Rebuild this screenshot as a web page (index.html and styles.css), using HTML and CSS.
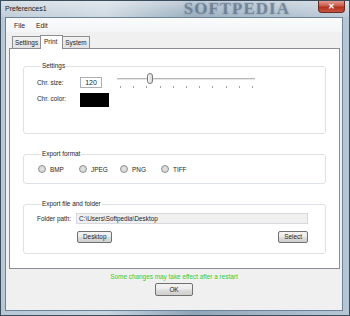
FILE: index.html
```html
<!DOCTYPE html>
<html>
<head>
    <meta charset="UTF-8">
    <title>Preferences dialog</title>
    <link rel="stylesheet" href="styles.css">
</head>
<body>
    <div class="window">
        <div class="titlebar">
            <span class="title">Preferences1</span>
            <span class="watermark">SOFTPEDIA</span>
            <div class="close-btn">&#x2715;</div>
        </div>

        <div class="client">
            <div class="menubar">
                <span class="menu-item">File</span>
                <span class="menu-item">Edit</span>
            </div>

            <div class="tabs">
                <div class="tab">Settings</div>
                <div class="tab tab-active">Print</div>
                <div class="tab">System</div>
            </div>

            <div class="panel">
                <fieldset class="group group-settings">
                    <legend>Settings</legend>
                    <div class="row">
                        <span class="label">Chr. size:</span>
                        <div class="num-box">120</div>
                        <div class="slider">
                            <div class="slider-track"></div>
                            <div class="slider-thumb"></div>
                            <div class="slider-ticks">
                                <i></i><i></i><i></i><i></i><i></i><i></i><i></i><i></i><i></i><i></i><i></i>
                            </div>
                        </div>
                    </div>
                    <div class="row">
                        <span class="label">Chr. color:</span>
                        <div class="color-box"></div>
                    </div>
                </fieldset>

                <fieldset class="group group-format">
                    <legend>Export format</legend>
                    <div class="radio-row">
                        <label class="radio"><span class="dot"></span>BMP</label>
                        <label class="radio"><span class="dot"></span>JPEG</label>
                        <label class="radio"><span class="dot"></span>PNG</label>
                        <label class="radio"><span class="dot"></span>TIFF</label>
                    </div>
                </fieldset>

                <fieldset class="group group-folder">
                    <legend>Export file and folder</legend>
                    <div class="row">
                        <span class="label label-path">Folder path:</span>
                        <div class="path-box">C:\Users\Softpedia\Desktop</div>
                    </div>
                    <div class="btn-row">
                        <button class="btn">Desktop</button>
                        <button class="btn">Select</button>
                    </div>
                </fieldset>
            </div>

            <div class="notice">Some changes may take effect after a restart</div>
            <div class="ok-row">
                <button class="btn btn-ok">OK</button>
            </div>
        </div>
    </div>
</body>
</html>
```

FILE: styles.css
```css
body {
    margin: 0;
    font-family: 'Liberation Sans', Arial, sans-serif;
    font-size: 6.4px;
    color: #1e1e1e;
    background: #a7b9c9;
}
.window {
    width: 350px;
    height: 316px;
    display: flex;
    flex-direction: column;
    background: linear-gradient(90deg, #b8c7d4 0%, #c9d5df 30%, #8fa5b8 55%, #a3b6c6 75%, #b7c6d3 100%);
    box-sizing: border-box;
    border: 1px solid #3b4c5c;
}
.titlebar {
    height: 16px;
    display: flex;
    align-items: flex-start;
    padding-left: 4px;
    background: linear-gradient(180deg, rgba(255,255,255,0.45) 0%, rgba(255,255,255,0.1) 100%);
}
.title {
    line-height: 15px;
    font-size: 7px;
    color: #1a1a1a;
}
.watermark {
    margin-left: auto;
    line-height: 16px;
    font-family: 'Liberation Serif', serif;
    font-size: 17px;
    font-weight: bold;
    letter-spacing: 1px;
    color: rgba(60, 80, 110, 0.4);
    text-shadow: 0 0 2px rgba(60, 80, 110, 0.4);
}
.close-btn {
    margin-left: 28px;
    margin-right: 4px;
    width: 27px;
    height: 12px;
    flex-shrink: 0;
    background: linear-gradient(180deg, #e49a8c 0%, #c8584a 45%, #b4301f 55%, #c65440 100%);
    border: 1px solid #6b2a22;
    border-top: none;
    border-radius: 0 0 4px 4px;
    box-sizing: border-box;
    color: #fff;
    font-size: 8px;
    font-weight: bold;
    text-align: center;
    line-height: 11px;
}
.client {
    flex: 1;
    margin: 0 6px 4px 4px;
    background: #f0f0f0;
    border: 1px solid #6d8399;
    display: flex;
    flex-direction: column;
}
.menubar {
    height: 14px;
    display: flex;
    align-items: center;
    gap: 11px;
    padding-left: 8px;
    font-size: 6.8px;
    background: linear-gradient(180deg, #fbfbfc 0%, #f3f5f7 100%);
}
.tabs {
    display: flex;
    margin: 3px 0 0 6px;
    height: 13px;
    align-items: flex-end;
}
.tab {
    height: 12px;
    box-sizing: border-box;
    padding: 0 2px;
    line-height: 12px;
    background: linear-gradient(180deg, #f2f2f2 0%, #e1e1e1 100%);
    border: 1px solid #8c8e94;
    border-bottom: none;
    margin-right: -1px;
}
.tab-active {
    height: 14px;
    margin-bottom: -1px;
    padding: 0 5px 0 3px;
    background: #fff;
    position: relative;
    line-height: 11px;
}
.panel {
    margin: 0 2px 0 3px;
    height: 221px;
    box-sizing: border-box;
    background: #fff;
    border: 1px solid #898c95;
    padding: 13px 13px 0 13px;
    display: flex;
    flex-direction: column;
    gap: 16px;
}
.group {
    margin: 0;
    border: 1px solid #dce2e7;
    border-radius: 3px;
    padding: 0 13px;
    min-width: 0;
}
.group legend {
    padding: 0 1px;
    margin-left: 4px;
    line-height: 8px;
}
.group-settings {
    height: 72px;
    box-sizing: border-box;
    padding-top: 4px;
}
.group-format {
    height: 34px;
    box-sizing: border-box;
}
.group-folder {
    height: 54px;
    box-sizing: border-box;
    padding-top: 2px;
}
.row {
    display: flex;
    align-items: center;
    height: 16px;
}
.label {
    width: 43px;
    flex-shrink: 0;
}
.label-path {
    width: 39px;
}
.num-box {
    width: 22px;
    height: 11px;
    box-sizing: border-box;
    border: 1px solid #abadb3;
    text-align: center;
    line-height: 9px;
    font-size: 7px;
}
.slider {
    position: relative;
    width: 138px;
    height: 16px;
    margin-left: 15px;
}
.slider-track {
    position: absolute;
    left: 0;
    right: 0;
    top: 4px;
    height: 1px;
    background: #b8b8b8;
    border-bottom: 1px solid #e6e6e6;
}
.slider-thumb {
    position: absolute;
    left: 30px;
    top: -1px;
    width: 6px;
    height: 11px;
    box-sizing: border-box;
    border: 1px solid #7a7a7a;
    border-radius: 3px;
    background: linear-gradient(90deg, #f7f7f7, #d9d9d9);
}
.slider-ticks {
    position: absolute;
    left: 3px;
    right: 2px;
    top: 12px;
    display: flex;
    justify-content: space-between;
}
.slider-ticks i {
    width: 1px;
    height: 2px;
    background: #a0a0a0;
}
.color-box {
    width: 29px;
    height: 14px;
    background: #000;
    margin-top: 4px;
}
.radio-row {
    display: flex;
    padding-top: 7px;
    padding-left: 1px;
}
.radio {
    width: 41px;
    display: flex;
    align-items: center;
    gap: 4px;
}
.dot {
    width: 6px;
    height: 6px;
    border-radius: 50%;
    border: 1px solid #8e8f8f;
    background: radial-gradient(circle, #e4e4e4 0%, #d0d0d0 100%);
}
.path-box {
    flex: 1;
    height: 11px;
    box-sizing: border-box;
    border: 1px solid #d6dadf;
    background: #f0f0f0;
    line-height: 9px;
    padding-left: 2px;
    margin-right: 4px;
}
.btn-row {
    display: flex;
    justify-content: space-between;
    margin: 5px 4px 0 40px;
}
.btn {
    font-family: 'Liberation Sans', Arial, sans-serif;
    font-size: 6.4px;
    color: #1e1e1e;
    height: 12px;
    padding: 0 5px;
    border: 1px solid #707070;
    border-radius: 2px;
    background: linear-gradient(180deg, #f3f3f3 0%, #ebebeb 48%, #dddddd 52%, #cfcfcf 100%);
    line-height: 10px;
}
.notice {
    text-align: center;
    color: #33cc33;
    margin-top: 3px;
    line-height: 9px;
}
.ok-row {
    display: flex;
    justify-content: center;
    margin-top: 2px;
}
.btn-ok {
    width: 38px;
    height: 13px;
}
```
